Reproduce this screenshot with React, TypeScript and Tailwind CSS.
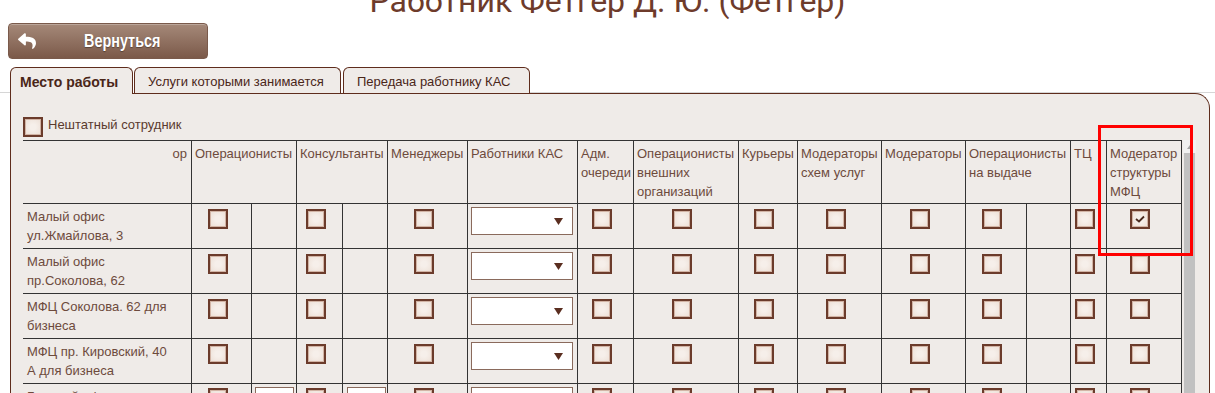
import React from "react";
import { FaReply } from "react-icons/fa";

const GRID =
  "grid grid-cols-[169px_60px_45px_46px_45px_80px_110px_56px_105px_59px_84px_84px_61px_44px_36px_75px]";

function Checkbox({ checked }: { checked?: boolean }) {
  return (
    <div className="w-5 h-5 border-2 border-[#6b3b2b] bg-[radial-gradient(circle,#f6efea_25%,#ecded4)] shadow-[inset_0_0_0_1px_#d2b4a5] flex items-center justify-center">
      {checked && (
        <svg width="10" height="8" viewBox="0 0 10 8">
          <path d="M1 4 L4 6.5 L9 1.5" fill="none" stroke="#4a2a1e" strokeWidth="1.8" />
        </svg>
      )}
    </div>
  );
}

function CbCell({ checked, last }: { checked?: boolean; last?: boolean }) {
  return (
    <div className={`h-[45px] border-r border-b border-[#333] flex justify-center ${last ? "pt-[4px]" : "pt-[5px]"}`}>
      <div className="mr-2">
        <Checkbox checked={checked} />
      </div>
    </div>
  );
}

function EmptyCell({ input, off }: { input?: boolean; off?: string }) {
  return (
    <div className="h-[45px] border-r border-b border-[#333] pt-[3px]">
      {input && <div className={`h-[26px] w-[39px] bg-white border border-[#8a6a5c] ${off}`} />}
    </div>
  );
}

function SelectCell() {
  return (
    <div className="h-[45px] border-r border-b border-[#333] pt-[3px] pl-[3px]">
      <div className="w-[102px] h-[28px] bg-white border border-[#8a6a5c] flex items-center justify-end pr-[9px]">
        <svg width="9" height="7" viewBox="0 0 9 7">
          <path d="M0 0 L9 0 L4.5 7 Z" fill="#5a2e20" />
        </svg>
      </div>
    </div>
  );
}

const headers: { t: string; span2?: boolean; right?: boolean }[] = [
  { t: "ор", right: true },
  { t: "Операционисты", span2: true },
  { t: "Консультанты", span2: true },
  { t: "Менеджеры" },
  { t: "Работники КАС" },
  { t: "Адм. очереди" },
  { t: "Операционисты внешних организаций" },
  { t: "Курьеры" },
  { t: "Модераторы схем услуг" },
  { t: "Модераторы" },
  { t: "Операционисты на выдаче", span2: true },
  { t: "ТЦ" },
  { t: "Модератор структуры МФЦ" },
];

const rows: { l1: string; l2: string; checked?: boolean; inputs?: boolean }[] = [
  { l1: "Малый офис", l2: "ул.Жмайлова, 3", checked: true },
  { l1: "Малый офис", l2: "пр.Соколова, 62" },
  { l1: "МФЦ Соколова. 62 для", l2: "бизнеса" },
  { l1: "МФЦ пр. Кировский, 40", l2: "А для бизнеса" },
  { l1: "Главный офис", l2: "ул.Ленина, 1", inputs: true },
];

export default function App() {
  return (
    <div className="relative w-[1215px] h-[393px] overflow-hidden bg-white font-['Liberation_Sans',Arial,sans-serif]">
      {/* Title */}
      <h1 className="-mt-[17px] h-[36px] leading-[36px] text-center text-[32px] font-normal text-[#6e3b2b] font-['Roboto',sans-serif] whitespace-nowrap">
        Работник Фетгер Д. Ю. (Фетгер)
      </h1>

      {/* Back button */}
      <div className="mt-[4px] ml-[8px] w-[200px] h-[36px] rounded-[4px] border border-[#7a5a4b] bg-[linear-gradient(#a58979,#7b5949)] flex items-center shadow-[inset_0_1px_0_rgba(255,255,255,0.25)]">
        <FaReply className="ml-[9px] text-white" size={18} />
        <span className="ml-[48px] inline-block origin-left scale-x-[0.8] text-white font-bold text-[18px] [text-shadow:0_1px_1px_rgba(0,0,0,0.35)]">
          Вернуться
        </span>
      </div>

      {/* Tabs */}
      <div className="mt-[8px] flex items-end h-[26px]">
        <div className="w-[10px] self-stretch border-b border-[#d6d6d6]" />
        <div className="relative z-10 h-[27px] -mb-[1px] w-[123px] border border-b-0 border-[#5e2c1c] rounded-t-[6px] bg-[#efebe8] pl-[9px] pt-[4px] text-[14px] font-bold text-[#4a2618] whitespace-nowrap">
          Место работы
        </div>
        <div className="ml-[1px] h-[26px] w-[207px] border border-b-0 border-[#5e2c1c] rounded-t-[6px] bg-[#efebe8] pl-[13px] pt-[4px] text-[13px] text-[#4a2618] whitespace-nowrap">
          Услуги которыми занимается
        </div>
        <div className="ml-[2px] h-[26px] w-[187px] border border-b-0 border-[#5e2c1c] rounded-t-[6px] bg-[#efebe8] pl-[13px] pt-[4px] text-[13px] text-[#4a2618] whitespace-nowrap">
          Передача работнику КАС
        </div>
        <div className="flex-1 self-stretch border-b border-[#d6d6d6]" />
      </div>

      {/* Panel */}
      <div className="ml-[10px] w-[1200px] h-[400px] border-t border-l border-r border-[#5e2c1c] rounded-tr-[15px] bg-[#efebe8] pl-[12px]">
        <div className="mt-[23px] flex items-start">
          <Checkbox />
          <span className="ml-[5px] text-[13px] leading-[16px] text-[#5a3a2e]">Нештатный сотрудник</span>
        </div>

        <div className="mt-[3px] flex">
          <div className={`${GRID} w-[1159px] border-t border-[#333] text-[13px] leading-[19px] text-[#6d4a3c]`}>
            {headers.map((h, i) => (
              <div
                key={i}
                className={`h-[63px] border-r border-b border-[#333] pt-[3px] ${h.span2 ? "col-span-2" : ""} ${h.right ? "text-right pr-[4px]" : "pl-[3px] pr-[1px]"}`}
              >
                {h.t}
              </div>
            ))}
            {rows.map((r, ri) => {
              const last = ri === rows.length - 1;
              return (
                <React.Fragment key={ri}>
                  <div className="h-[45px] border-r border-b border-[#333] pl-[4px] pt-[3px] whitespace-nowrap">
                    {r.l1}
                    <br />
                    {r.l2}
                  </div>
                  <CbCell last={last} />
                  <EmptyCell input={r.inputs} off="ml-[3px]" />
                  <CbCell last={last} />
                  <EmptyCell input={r.inputs} off="ml-[4px] w-[38px]" />
                  <CbCell last={last} />
                  <SelectCell />
                  <CbCell last={last} />
                  <CbCell last={last} />
                  <CbCell last={last} />
                  <CbCell last={last} />
                  <CbCell last={last} />
                  <CbCell last={last} />
                  <EmptyCell />
                  <CbCell last={last} />
                  <CbCell last={last} checked={r.checked} />
                </React.Fragment>
              );
            })}
          </div>

          {/* Scrollbar */}
          <div className="ml-[1px] w-[13px] flex flex-col">
            <div className="h-[13px] bg-[#f1f1f1] flex items-center justify-center">
              <svg width="6" height="4" viewBox="0 0 6 4">
                <path d="M0 4 L3 0 L6 4 Z" fill="#a3a3a3" />
              </svg>
            </div>
            <div className="flex-1 ml-[1px] w-[11px] bg-[#c1c1c1]" />
          </div>
        </div>
      </div>

      {/* Red highlight */}
      <div className="absolute left-[1098px] top-[125px] w-[95px] h-[131px] border-[3px] border-[#ff0000]" />
    </div>
  );
}
